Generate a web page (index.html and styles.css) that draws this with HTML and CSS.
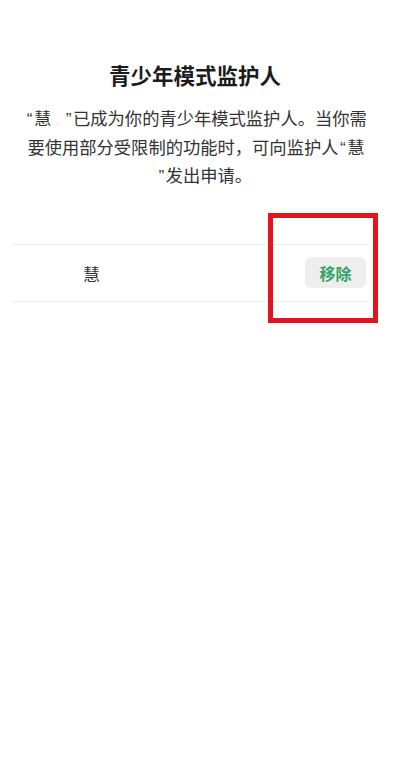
FILE: index.html
```html
<!DOCTYPE html>
<html lang="zh-CN">
<head>
<meta charset="utf-8">
<title>青少年模式监护人</title>
<link rel="stylesheet" href="styles.css">
</head>
<body>
<div class="page">
  <h1 class="title">青少年模式监护人</h1>
  <div class="desc">
    <div class="line"><span class="q">“</span>慧<span class="mask">.</span><span class="q">”</span>已成为你的青少年模式监护人。当你需</div>
    <div class="line">要使用部分受限制的功能时，可向监护人<span class="q">“</span>慧</div>
    <div class="line last"><span class="q">”</span>发出申请。</div>
  </div>
  <div class="row">
    <span class="name">慧</span>
    <span class="btn">移除</span>
  </div>
</div>
<div class="highlight"></div>
</body>
</html>
```
FILE: styles.css
```css
html, body {
  margin: 0;
  padding: 0;
  background: #ffffff;
}
body {
  width: 400px;
  height: 763px;
  position: relative;
  overflow: hidden;
  font-family: "Noto Sans CJK SC", "Noto Sans", sans-serif;
}
.page {
  padding: 60px 20px 0 12px;
  display: flex;
  flex-direction: column;
}
.title {
  margin: 0;
  font-size: 21.5px;
  line-height: 30px;
  font-weight: 700;
  color: #1c1c1c;
  text-align: center;
  padding-right: 2px;
}
.desc {
  margin-top: 14px;
  font-size: 17.3px;
  line-height: 28.5px;
  color: #333333;
  text-align: center;
}
.line {
  white-space: nowrap;
  height: 28.5px;
}
.line.last {
  padding-left: 17px;
}
.mask {
  display: inline-block;
  width: 13px;
  line-height: 0;
  color: #c8c8c8;
  font-size: 10px;
  text-align: left;
  text-indent: 5px;
}
.q {
  font-family: "Liberation Sans", sans-serif;
  line-height: 0;
  padding: 0 1.5px;
}
.row {
  margin-top: 54px;
  margin-right: 10px;
  height: 56px;
  border-top: 1px solid #efefef;
  border-bottom: 1px solid #efefef;
  display: flex;
  align-items: center;
  justify-content: space-between;
  padding: 0 4px 0 71px;
}
.name {
  font-size: 17px;
  color: #333333;
  padding-top: 2px;
}
.btn {
  width: 61px;
  height: 31px;
  border-radius: 6px;
  background: #eeeeee;
  color: #36a366;
  font-size: 16px;
  font-weight: 700;
  display: flex;
  align-items: center;
  justify-content: center;
}
.highlight {
  position: absolute;
  left: 268px;
  top: 213px;
  width: 100px;
  height: 100px;
  border: 5px solid #e3141e;
}
```
